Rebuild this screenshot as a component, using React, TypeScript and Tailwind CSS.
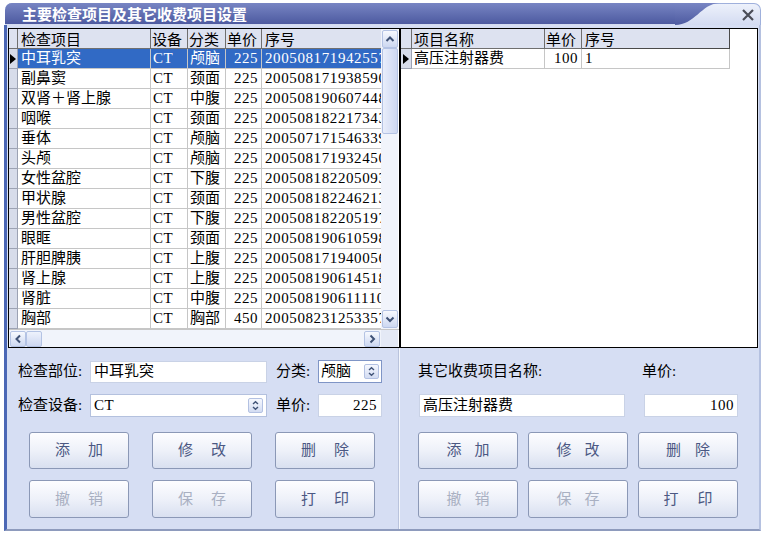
import React from 'react';

const rows: string[][] = [
  ['中耳乳突', 'CT', '颅脑', '225', '200508171942557'],
  ['副鼻窦', 'CT', '颈面', '225', '200508171938590'],
  ['双肾＋肾上腺', 'CT', '中腹', '225', '200508190607448'],
  ['咽喉', 'CT', '颈面', '225', '200508182217343'],
  ['垂体', 'CT', '颅脑', '225', '200507171546339'],
  ['头颅', 'CT', '颅脑', '225', '200508171932450'],
  ['女性盆腔', 'CT', '下腹', '225', '200508182205093'],
  ['甲状腺', 'CT', '颈面', '225', '200508182246213'],
  ['男性盆腔', 'CT', '下腹', '225', '200508182205197'],
  ['眼眶', 'CT', '颈面', '225', '200508190610598'],
  ['肝胆脾胰', 'CT', '上腹', '225', '200508171940056'],
  ['肾上腺', 'CT', '上腹', '225', '200508190614518'],
  ['肾脏', 'CT', '中腹', '225', '200508190611110'],
  ['胸部', 'CT', '胸部', '450', '200508231253357'],
];

function Tri() {
  return (
    <svg width="6" height="10" viewBox="0 0 6 10">
      <path d="M0 0 L6 5 L0 10 Z" fill="#000" />
    </svg>
  );
}

function Chev({ dir }: { dir: 'up' | 'down' | 'left' | 'right' }) {
  const d =
    dir === 'up'
      ? 'M2.5 8 L6 4.5 L9.5 8'
      : dir === 'down'
      ? 'M2.5 4.5 L6 8 L9.5 4.5'
      : dir === 'left'
      ? 'M8 2.5 L4.5 6 L8 9.5'
      : 'M4.5 2.5 L8 6 L4.5 9.5';
  return (
    <svg width="12" height="12" viewBox="0 0 12 12">
      <path d={d} fill="none" stroke="#3f5276" strokeWidth="2" />
    </svg>
  );
}

function Spin() {
  return (
    <div className="w-[15px] h-[15px] rounded-[2px] border border-[#b3c1e2] bg-linear-to-b from-[#f6f8fe] to-[#d3dcf2] flex items-center justify-center">
      <svg width="9" height="11" viewBox="0 0 9 11">
        <path d="M2 4 L4.5 1.8 L7 4 M2 7 L4.5 9.2 L7 7" fill="none" stroke="#3f5276" strokeWidth="1.4" />
      </svg>
    </div>
  );
}

function Btn({ a, b, gap, disabled }: { a: string; b: string; gap: string; disabled?: boolean }) {
  return (
    <div
      className={`w-[100px] h-full rounded-[3px] border border-[#8b98b6] bg-linear-to-b from-[#fdfdff] via-[#eef1f9] to-[#d9e0f0] flex items-center justify-center text-[15px] ${gap} ${
        disabled ? 'text-[#a9b0c2]' : 'text-[#4b5883]'
      }`}
    >
      <span>{a}</span>
      <span>{b}</span>
    </div>
  );
}

const cellBorder = 'border-r border-b border-[#c6c6c6]';

export default function App() {
  return (
    <div className="w-[763px] h-[540px] bg-white overflow-hidden font-['Liberation_Serif','Noto_Sans_CJK_SC',serif] text-[15px] leading-[19px] text-black">
      <div className="ml-[4px] mt-[3px] w-[757px] flex flex-col">
        {/* Title bar */}
        <div className="ml-[1px] h-[22px] flex rounded-t-[7px] bg-linear-to-b from-[#edf1fb] to-[#d3dbf1] border-t border-r border-[#9fb0dc]">
          <div className="w-[670px] h-full rounded-tl-[7px] bg-linear-to-b from-[#7885c3] to-[#4d5aa0] pl-[17px] flex items-center text-white font-bold text-[15px] font-['Noto_Sans_CJK_SC',sans-serif] -mt-px">
            主要检查项目及其它收费项目设置
          </div>
          <svg width="44" height="22" viewBox="0 0 44 22" className="-mt-px">
            <defs>
              <linearGradient id="tg" x1="0" y1="0" x2="0" y2="1">
                <stop offset="0" stopColor="#7885c3" />
                <stop offset="1" stopColor="#4d5aa0" />
              </linearGradient>
            </defs>
            <path d="M0 0 H44 C26 1 20 22 0 22 Z" fill="url(#tg)" />
          </svg>
          <div className="flex-1 flex items-center justify-end pr-[6px]">
            <svg width="12" height="12" viewBox="0 0 12 12">
              <path d="M1 1 L11 11 M11 1 L1 11" stroke="#4a4d57" strokeWidth="2.2" />
            </svg>
          </div>
        </div>

        {/* Body */}
        <div className="h-[506px] border-l-[3px] border-l-[#4b67b5] border-r-2 border-r-[#b5c1e0] border-b-2 border-b-[#8e9bbd] bg-[#d6def3] flex flex-col">
          {/* grids */}
          <div className="mt-[3px] pl-[1px] flex h-[320px]">
            {/* left grid */}
            <div className="w-[391px] h-full border-l border-t border-b border-black bg-white flex flex-col">
              <div className="flex h-[300px]">
                <div className="w-[372px] flex flex-col overflow-hidden">
                  {/* header */}
                  <div className="flex h-[20px] bg-[#dde2f0] font-['Noto_Sans_CJK_SC',sans-serif]">
                    <div className="w-[9px] shrink-0 border-r border-b border-[#6f6f6f]" />
                    <div className="w-[133px] shrink-0 border-r border-b border-[#6f6f6f] pl-[3px] flex items-center">检查项目</div>
                    <div className="w-[37px] shrink-0 border-r border-b border-[#6f6f6f] pl-[1px] flex items-center">设备</div>
                    <div className="w-[38px] shrink-0 border-r border-b border-[#6f6f6f] pl-[1px] flex items-center">分类</div>
                    <div className="w-[36px] shrink-0 border-r border-b border-[#6f6f6f] pl-[1px] flex items-center">单价</div>
                    <div className="w-[119px] shrink-0 border-b border-[#6f6f6f] pl-[3px] flex items-center">序号</div>
                  </div>
                  {rows.map((r, i) => {
                    const sel = i === 0;
                    const c = sel ? 'bg-[#316ac5] text-white' : '';
                    return (
                      <div key={i} className="flex h-[20px] whitespace-nowrap">
                        <div className="w-[9px] shrink-0 bg-[#d7dcea] border-r border-b border-[#9ca2b3] flex items-center justify-center">
                          {sel && <Tri />}
                        </div>
                        <div className={`w-[133px] shrink-0 ${cellBorder} pl-[3px] flex items-center ${c}`}>{r[0]}</div>
                        <div className={`w-[37px] shrink-0 ${cellBorder} pl-[2px] flex items-center tracking-[0.5px] ${c}`}>{r[1]}</div>
                        <div className={`w-[38px] shrink-0 ${cellBorder} pl-[2px] flex items-center ${c}`}>{r[2]}</div>
                        <div className={`w-[36px] shrink-0 ${cellBorder} pr-[3px] flex items-center justify-end tracking-[0.5px] ${c}`}>{r[3]}</div>
                        <div className={`w-[119px] shrink-0 border-b border-[#c6c6c6] pl-[3px] flex items-center overflow-hidden tracking-[0.6px] ${c}`}>{r[4]}</div>
                      </div>
                    );
                  })}
                </div>
                {/* vertical scrollbar */}
                <div className="w-[17px] h-full bg-[#f1f4fb] flex flex-col pl-[1px]">
                  <div className="w-[16px] h-[18px] mt-[1px] rounded-[2px] border border-[#b4c3e4] bg-linear-to-b from-[#f7f9fe] to-[#cdd8f1] flex items-center justify-center">
                    <Chev dir="up" />
                  </div>
                  <div className="w-[16px] h-[86px] rounded-[2px] border border-[#b4c3e4] bg-linear-to-r from-[#e9eefb] to-[#cdd7f1]" />
                  <div className="flex-1" />
                  <div className="w-[16px] h-[18px] mb-[1px] rounded-[2px] border border-[#b4c3e4] bg-linear-to-b from-[#f7f9fe] to-[#cdd8f1] flex items-center justify-center">
                    <Chev dir="down" />
                  </div>
                </div>
              </div>
              {/* horizontal scrollbar */}
              <div className="flex h-[18px] border-t border-[#c6c6c6]">
                <div className="w-[372px] h-full bg-[#f1f4fb] flex items-center">
                  <div className="w-[16px] h-[16px] ml-[1px] rounded-[2px] border border-[#b4c3e4] bg-linear-to-b from-[#f7f9fe] to-[#cdd8f1] flex items-center justify-center">
                    <Chev dir="left" />
                  </div>
                  <div className="w-[16px] h-[16px] rounded-[2px] border border-[#b4c3e4] bg-linear-to-b from-[#eef2fc] to-[#cdd7f1]" />
                  <div className="flex-1" />
                  <div className="w-[16px] h-[16px] mr-[1px] rounded-[2px] border border-[#b4c3e4] bg-linear-to-b from-[#f7f9fe] to-[#cdd8f1] flex items-center justify-center">
                    <Chev dir="right" />
                  </div>
                </div>
                <div className="w-[17px] h-full bg-[#e4e9f5]" />
              </div>
            </div>

            {/* right grid */}
            <div className="w-[359px] h-full border-l-2 border-t border-r border-b border-black bg-white flex flex-col">
              <div className="flex h-[20px] font-['Noto_Sans_CJK_SC',sans-serif]">
                <div className="w-[11px] shrink-0 bg-[#dde2f0] border-r border-b border-[#6f6f6f]" />
                <div className="w-[133px] shrink-0 bg-[#dde2f0] border-r border-b border-[#6f6f6f] pl-[2px] flex items-center">项目名称</div>
                <div className="w-[37px] shrink-0 bg-[#dde2f0] border-r border-b border-[#6f6f6f] pl-[1px] flex items-center">单价</div>
                <div className="w-[148px] shrink-0 bg-[#dde2f0] border-r border-b border-[#4a4a4a] pl-[3px] flex items-center">序号</div>
              </div>
              <div className="flex h-[20px]">
                <div className="w-[11px] shrink-0 bg-[#d7dcea] border-r border-b border-[#9ca2b3] flex items-center justify-center">
                  <Tri />
                </div>
                <div className={`w-[133px] shrink-0 ${cellBorder} pl-[2px] flex items-center`}>高压注射器费</div>
                <div className={`w-[37px] shrink-0 ${cellBorder} pr-[3px] flex items-center justify-end tracking-[0.5px]`}>100</div>
                <div className={`w-[148px] shrink-0 ${cellBorder} pl-[3px] flex items-center`}>1</div>
              </div>
            </div>
          </div>

          {/* bottom panels */}
          <div className="flex flex-1">
            {/* left panel */}
            <div className="w-[391px] h-full flex flex-col">
              <div className="mt-[12px] flex h-[23px] items-center">
                <div className="w-[83px] pl-[11px]">检查部位:</div>
                <div className="w-[177px] h-[22px] bg-white border border-[#c9d2e6] pl-[3px] flex items-center">中耳乳突</div>
                <div className="ml-[9px] w-[42px]">分类:</div>
                <div className="w-[64px] h-[23px] bg-white border border-[#7f95c6] pl-[2px] pr-[2px] flex items-center justify-between">
                  <span>颅脑</span>
                  <Spin />
                </div>
              </div>
              <div className="mt-[11px] flex h-[23px] items-center">
                <div className="w-[83px] pl-[11px]">检查设备:</div>
                <div className="w-[177px] h-[23px] bg-white border border-[#b4c1de] pl-[3px] pr-[3px] flex items-center justify-between">
                  <span className="tracking-[0.5px]">CT</span>
                  <Spin />
                </div>
                <div className="ml-[9px] w-[42px]">单价:</div>
                <div className="w-[64px] h-[23px] bg-white border border-[#c9d2e6] pr-[4px] flex items-center justify-end tracking-[0.5px]">225</div>
              </div>
              <div className="mt-[15px] h-[37px] flex pl-[22px] gap-[23px]">
                <Btn a="添" b="加" gap="gap-[18px]" />
                <Btn a="修" b="改" gap="gap-[18px]" />
                <Btn a="删" b="除" gap="gap-[18px]" />
              </div>
              <div className="mt-[11px] h-[38px] flex pl-[22px] gap-[23px]">
                <Btn a="撤" b="销" gap="gap-[18px]" disabled />
                <Btn a="保" b="存" gap="gap-[18px]" disabled />
                <Btn a="打" b="印" gap="gap-[18px]" />
              </div>
            </div>
            {/* divider */}
            <div className="w-[2px] h-full flex">
              <div className="w-px h-full bg-[#b9c3dc]" />
              <div className="w-px h-full bg-[#f4f7fd]" />
            </div>
            {/* right panel */}
            <div className="flex-1 h-full flex flex-col">
              <div className="mt-[13px] h-[21px] flex items-center">
                <div className="ml-[18px] w-[224px]">其它收费项目名称:</div>
                <div>单价:</div>
              </div>
              <div className="mt-[12px] h-[23px] flex items-center">
                <div className="ml-[19px] w-[206px] h-[23px] bg-white border border-[#c9d2e6] pl-[3px] flex items-center">高压注射器费</div>
                <div className="ml-[19px] w-[94px] h-[23px] bg-white border border-[#c9d2e6] pr-[3px] flex items-center justify-end tracking-[0.5px]">100</div>
              </div>
              <div className="mt-[15px] h-[37px] flex pl-[18px] gap-[10px]">
                <Btn a="添" b="加" gap="gap-[13px]" />
                <Btn a="修" b="改" gap="gap-[13px]" />
                <Btn a="删" b="除" gap="gap-[14px]" />
              </div>
              <div className="mt-[11px] h-[38px] flex pl-[18px] gap-[10px]">
                <Btn a="撤" b="销" gap="gap-[13px]" disabled />
                <Btn a="保" b="存" gap="gap-[13px]" disabled />
                <Btn a="打" b="印" gap="gap-[19px]" />
              </div>
            </div>
          </div>
        </div>
      </div>
    </div>
  );
}
